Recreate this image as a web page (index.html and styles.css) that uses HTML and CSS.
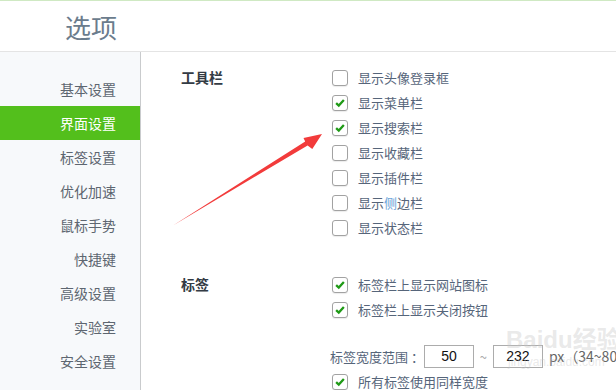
FILE: index.html
```html
<!DOCTYPE html>
<html lang="zh-CN">
<head>
<meta charset="utf-8">
<title>选项</title>
<link rel="stylesheet" href="styles.css">
</head>
<body>
<div class="page">
  <div class="topline"></div>
  <header class="header"><h1 class="title">选项</h1></header>
  <div class="main">
    <nav class="sidebar">
      <div class="nav-item">基本设置</div>
      <div class="nav-item active">界面设置</div>
      <div class="nav-item">标签设置</div>
      <div class="nav-item">优化加速</div>
      <div class="nav-item">鼠标手势</div>
      <div class="nav-item">快捷键</div>
      <div class="nav-item">高级设置</div>
      <div class="nav-item">实验室</div>
      <div class="nav-item">安全设置</div>
    </nav>
    <div class="content">
      <section class="section">
        <div class="sec-title">工具栏</div>
        <div class="options">
          <label class="opt"><span class="cb"></span><span>显示头像登录框</span></label>
          <label class="opt"><span class="cb checked"><svg viewBox="0 0 16 16"><path d="M3.6 8.2 L6.6 11 L12.4 4.6"/></svg></span><span>显示菜单栏</span></label>
          <label class="opt"><span class="cb checked"><svg viewBox="0 0 16 16"><path d="M3.6 8.2 L6.6 11 L12.4 4.6"/></svg></span><span>显示搜索栏</span></label>
          <label class="opt"><span class="cb"></span><span>显示收藏栏</span></label>
          <label class="opt"><span class="cb"></span><span>显示插件栏</span></label>
          <label class="opt"><span class="cb"></span><span>显示<span class="hl">侧</span>边栏</span></label>
          <label class="opt"><span class="cb"></span><span>显示状态栏</span></label>
        </div>
      </section>
      <section class="section section-tabs">
        <div class="sec-title">标签</div>
        <div class="options">
          <label class="opt"><span class="cb checked"><svg viewBox="0 0 16 16"><path d="M3.6 8.2 L6.6 11 L12.4 4.6"/></svg></span><span>标签栏上显示网站图标</span></label>
          <label class="opt"><span class="cb checked"><svg viewBox="0 0 16 16"><path d="M3.6 8.2 L6.6 11 L12.4 4.6"/></svg></span><span>标签栏上显示关闭按钮</span></label>
          <div class="width-row">
            <span class="wlabel">标签宽度范围 ：</span>
            <span class="inp">50</span>
            <span class="tilde">~</span>
            <span class="inp">232</span>
            <span class="unit">px（34~80</span>
          </div>
          <label class="opt"><span class="cb checked"><svg viewBox="0 0 16 16"><path d="M3.6 8.2 L6.6 11 L12.4 4.6"/></svg></span><span>所有标签使用同样宽度</span></label>
        </div>
      </section>
    </div>
  </div>
  <svg class="arrow" viewBox="0 0 616 390" width="616" height="390">
    <polygon points="173,225.5 305.2,141.6 303.5,138 322,134 312.3,149 307.6,145.4" fill="#f23b3b"/>
  </svg>
  <div class="watermark"><span class="wm-big">Bai<span class="wm-du">du</span>经验</span><span class="wm-small">jingyan.baidu.com</span></div>
</div>
</body>
</html>
```

FILE: styles.css
```css
* { box-sizing: border-box; }
html, body { margin: 0; padding: 0; }
body {
  width: 616px;
  height: 390px;
  overflow: hidden;
  background: #fff;
  font-family: "Noto Sans CJK SC", "Noto Sans", sans-serif;
}
.page {
  position: relative;
  width: 616px;
  height: 390px;
  overflow: hidden;
}
.topline {
  height: 1px;
  background: #cfe9c3;
}
.header {
  height: 51px;
  border-bottom: 1px solid #e4e4e4;
}
.title {
  margin: 0;
  padding-left: 65px;
  font-size: 26px;
  font-weight: 400;
  line-height: 52px;
  color: #6b7c8d;
}
.main {
  display: flex;
  height: 338px;
}
.sidebar {
  width: 141px;
  flex: none;
  background: #f7f9fb;
  border-right: 1px solid #c9cbcd;
  padding-top: 20px;
}
.nav-item {
  height: 34px;
  line-height: 34px;
  text-align: right;
  padding-right: 24px;
  font-size: 14px;
  color: #5d6670;
}
.nav-item.active {
  background: #53bf1c;
  color: #fff;
}
.content {
  flex: 1;
  padding-top: 13px;
  white-space: nowrap;
  overflow: hidden;
}
.section {
  display: flex;
}
.section-tabs {
  margin-top: 32px;
}
.sec-title {
  width: 191px;
  flex: none;
  padding-left: 40px;
  font-size: 14px;
  font-weight: 700;
  line-height: 25px;
  color: #333b44;
}
.options {
  display: flex;
  flex-direction: column;
}
.opt {
  display: flex;
  align-items: center;
  height: 25px;
  font-size: 13px;
  color: #56657a;
}
.cb {
  width: 16px;
  height: 16px;
  flex: none;
  margin-right: 10px;
  border: 1px solid #a2a2a2;
  border-radius: 3px;
  background: #fff;
  box-shadow: 0 1px 1px rgba(0,0,0,0.08);
  display: flex;
  align-items: center;
  justify-content: center;
}
.cb svg {
  width: 14px;
  height: 14px;
}
.cb path {
  fill: none;
  stroke: #1f9a16;
  stroke-width: 2.6;
  stroke-linecap: butt;
  stroke-linejoin: miter;
}
.hl { color: #6aa2d8; }
.width-row {
  display: flex;
  align-items: center;
  height: 26px;
  margin-top: 21px;
  margin-left: -2px;
  font-size: 13px;
  color: #56657a;
}
.wlabel { margin-right: 0; }
.inp {
  width: 50px;
  height: 23px;
  border: 1px solid #acacac;
  text-align: center;
  line-height: 21px;
  font-size: 14px;
  color: #111;
  font-family: "Liberation Sans", sans-serif;
}
.tilde {
  width: 19px;
  text-align: center;
  color: #aaa;
}
.unit {
  margin-left: 6px;
  color: #666;
  font-size: 14px;
}
.arrow {
  position: absolute;
  left: 0;
  top: 0;
  pointer-events: none;
}
.watermark {
  position: absolute;
  left: 506px;
  top: 326px;
  display: flex;
  flex-direction: column;
  white-space: nowrap;
  pointer-events: none;
  color: rgba(200,200,200,0.4);
  font-family: "Liberation Sans", "Noto Sans CJK SC", sans-serif;
}
.wm-big {
  font-size: 24px;
  line-height: 28px;
  font-weight: 700;
}
.wm-small {
  font-size: 12px;
  line-height: 16px;
  padding-left: 2px;
}
```
